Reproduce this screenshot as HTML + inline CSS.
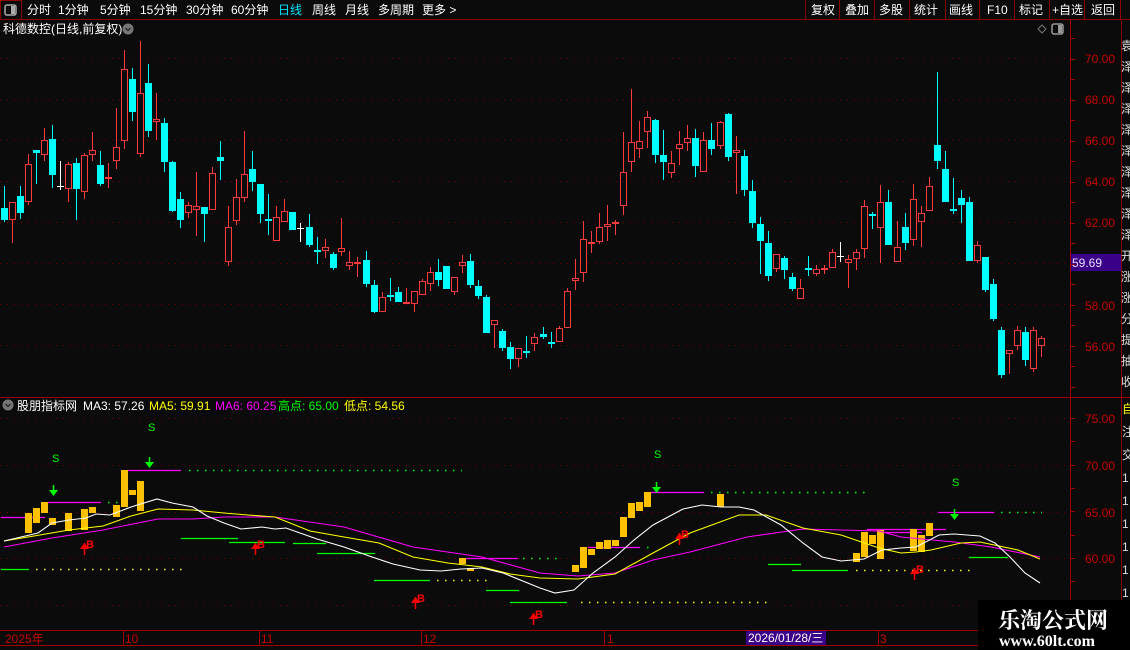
<!DOCTYPE html>
<html><head><meta charset="utf-8"><style>
html,body{margin:0;padding:0;background:#0b0b0b;width:1130px;height:650px;overflow:hidden}
svg{display:block}
text{font-family:"Liberation Sans","Noto Sans CJK SC",sans-serif;font-size:12px}
</style></head><body>
<svg id="s" width="1130" height="650" xmlns="http://www.w3.org/2000/svg">
<rect width="1130" height="650" fill="#0b0b0b"/>
<g fill="#fff">
<rect x="0.5" y="0.5" width="21" height="19" fill="none" stroke="#8b0000"/>
<rect x="5" y="5" width="11" height="10" rx="2" fill="none" stroke="#aaa" stroke-width="1.5"/><rect x="11" y="6" width="4" height="8" fill="#aaa"/>
<text x="27" y="14">分时</text><text x="58" y="14">1分钟</text><text x="100" y="14">5分钟</text><text x="140" y="14">15分钟</text><text x="186" y="14">30分钟</text><text x="231" y="14">60分钟</text>
<text x="278" y="14" fill="#00e5ff">日线</text><text x="312" y="14">周线</text><text x="345" y="14">月线</text><text x="378" y="14">多周期</text><text x="422" y="14">更多 &gt;</text>
<text x="811" y="14">复权</text><text x="845" y="14">叠加</text><text x="879" y="14">多股</text><text x="914" y="14">统计</text><text x="949" y="14">画线</text><text x="987" y="14">F10</text><text x="1019" y="14">标记</text><text x="1052" y="14">+自选</text><text x="1091" y="14">返回</text>
</g>
<g stroke="#8b0000" fill="none">
<line x1="0" y1="19.5" x2="1130" y2="19.5"/>
<line x1="805.5" y1="0" x2="805.5" y2="20"/><line x1="839.5" y1="0" x2="839.5" y2="20"/><line x1="874.5" y1="0" x2="874.5" y2="20"/><line x1="909.5" y1="0" x2="909.5" y2="20"/><line x1="945.5" y1="0" x2="945.5" y2="20"/><line x1="979.5" y1="0" x2="979.5" y2="20"/><line x1="1014.5" y1="0" x2="1014.5" y2="20"/><line x1="1049.5" y1="0" x2="1049.5" y2="20"/><line x1="1084.5" y1="0" x2="1084.5" y2="20"/><line x1="1120.5" y1="0" x2="1120.5" y2="20"/>
<line x1="1070.5" y1="20" x2="1070.5" y2="645" stroke="#a00000"/>
<line x1="1121.5" y1="20" x2="1121.5" y2="650"/>
<line x1="0" y1="397.5" x2="1130" y2="397.5" stroke="#a00000"/>
<line x1="0" y1="630.5" x2="1070" y2="630.5" stroke="#a00000"/>
<line x1="0" y1="645.5" x2="1070" y2="645.5" stroke="#a00000"/>
</g>
<text x="3" y="33" fill="#fff">科德数控(日线,前复权)</text>
<circle cx="128" cy="29" r="5.5" fill="#777"/><path d="M125.5 28 l2.5 2.5 l2.5 -2.5" stroke="#222" fill="none" stroke-width="1.3"/>
<path d="M1042 25 l4 4 l-4 4 l-4 -4z" stroke="#777" fill="none"/>
<rect x="1052" y="24" width="11" height="10" rx="2" fill="none" stroke="#999" stroke-width="1.5"/><rect x="1058" y="25" width="4" height="8" fill="#999"/>
<g id="grid"></g>
<g id="candles"></g>
<g fill="#c80000">
<text x="1085" y="63">70.00</text><text x="1085" y="104">68.00</text><text x="1085" y="145">66.00</text><text x="1085" y="186">64.00</text><text x="1085" y="227">62.00</text><text x="1085" y="310">58.00</text><text x="1085" y="351">56.00</text>
<text x="1085" y="423">75.00</text><text x="1085" y="470">70.00</text><text x="1085" y="517">65.00</text><text x="1085" y="563">60.00</text>
</g>
<rect x="1071" y="254" width="50" height="17" fill="#3a0088"/>
<text x="1072" y="267" fill="#e8e0ff">59.69</text>
<g id="ticks" stroke="#a00000"></g>
<g fill="#ddd" id="strip"></g>
<circle cx="8" cy="405" r="5.5" fill="#777"/><path d="M5.5 404 l2.5 2.5 l2.5 -2.5" stroke="#222" fill="none" stroke-width="1.3"/>
<text x="17" y="410" fill="#fff">股朋指标网</text>
<text x="83" y="410" fill="#fff">MA3: 57.26</text>
<text x="149" y="410" fill="#ffff00">MA5: 59.91</text>
<text x="215" y="410" fill="#ff00ff">MA6: 60.25</text>
<text x="278" y="410" fill="#00ff00">高点: 65.00</text>
<text x="344" y="410" fill="#ffff00">低点: 54.56</text>
<g id="ind"></g>
<g fill="#c80000">
<text x="5" y="643">2025年</text><text x="125" y="643">10</text><text x="261" y="643">11</text><text x="423" y="643">12</text><text x="607" y="643">1</text><text x="880" y="643">3</text>
</g>
<g stroke="#a00000"><line x1="123.5" y1="630" x2="123.5" y2="645"/><line x1="259.5" y1="630" x2="259.5" y2="645"/><line x1="421.5" y1="630" x2="421.5" y2="645"/><line x1="604.5" y1="630" x2="604.5" y2="645"/><line x1="878.5" y1="630" x2="878.5" y2="645"/></g>
<rect x="746" y="631" width="80" height="14" fill="#3a0088"/>
<text x="748" y="642" fill="#fff">2026/01/28/三</text>
<rect x="978" y="600" width="152" height="50" fill="#000"/>
<text x="998" y="628" fill="#fff" style="font-family:'Noto Serif CJK SC','Noto Sans CJK SC',serif;font-size:22px;font-weight:bold">乐淘公式网</text>
<text x="999" y="646" fill="#fff" style="font-family:'Liberation Serif',serif;font-size:16px;font-weight:bold">www.60lt.com</text>
</svg>
<script>
var NS="http://www.w3.org/2000/svg";
function el(p,t,a){var e=document.createElementNS(NS,t);for(var k in a)e.setAttribute(k,a[k]);p.appendChild(e);return e;}
var G=document.getElementById('grid'),C=document.getElementById('candles'),I=document.getElementById('ind'),T=document.getElementById('ticks');
[58.3,99.3,140.3,181.3,222.3,263.3,304.3,345.3,418,465,512,558,605].forEach(function(y){el(G,'line',{x1:0,x2:1070,y1:Math.round(y)+.5,y2:Math.round(y)+.5,stroke:'#6e0000','stroke-dasharray':'1 6'});});
for(var y=38;y<395;y+=20.5)el(T,'line',{x1:1070,x2:1075,y1:Math.round(y)+.5,y2:Math.round(y)+.5});
for(var y=418;y<628;y+=23.3)el(T,'line',{x1:1070,x2:1075,y1:Math.round(y)+.5,y2:Math.round(y)+.5});
var S=document.getElementById('strip');
for(var i=0;i<17;i++)el(S,'text',{x:1121,y:50+i*21}).textContent=["袁","泽","泽","泽","泽","泽","泽","泽","泽","泽","开","涨","涨","分","提","抽","收"][i];
["自","注","交","1","1","1","1","1","1","1","1","1"].forEach(function(c,i){var t=el(S,'text',{x:1122,y:413+i*23});t.textContent=c;if(i==0)t.setAttribute('fill','#ff0');});
var Z6=[[13,'c',504,540,438,545],[37,'r',487,541,487,608],[61,'c',468,518,438,537],[85,'r',373,487,342,494],[109,'c',330,338,330,431],[133,'r',301,346,264,362],[157,'c',297,404,255,443],[181,'w',437,440,363,450],[205,'r',373,446,366,486],[229,'c',369,446,354,540],[253,'r',346,455,339,476],[277,'r',331,346,276,362],[301,'c',375,431,333,437],[325,'r',411,415,369,443],[349,'r',322,364,204,386],[373,'r',88,304,30,326],[397,'c',117,215,84,242],[421,'r',160,343,3,350],[445,'c',129,272,72,291],[469,'r',238,247,159,299],[493,'c',249,365,234,395],[517,'c',366,512,363,515],[541,'c',477,539,456,563],[565,'r',496,520,486,533],[589,'r',499,511,396,587],[613,'c',501,521,501,605],[637,'r',400,511,381,511],[661,'c',351,362,303,419],[685,'r',562,667,498,677],[709,'r',472,544,417,554],[733,'r',403,475,273,485],[757,'c',387,425,333,452],[781,'c',432,521,432,549],[805,'c',537,542,462,584],[829,'r',532,604,498,604],[853,'r',514,547,477,547],[877,'c',516,569,516,569],[901,'w',563,565,550,606]];
var Z9=[[58,'c',441,494,402,500],[82,'c',510,512,471,551],[106,'r',502,514,477,533],[130,'c',522,563,516,570],[154,'r',505,517,414,527],[178,'r',547,559,513,569],[202,'r',546,548,531,590],[229,'c',540,611,513,620],[253,'c',615,695,600,699],[277,'r',652,697,636,697],[301,'c',645,647,594,662],[325,'c',636,665,621,665],[349,'r',667,673,624,673],[373,'r',634,673,634,695],[397,'r',604,646,598,646],[421,'r',577,613,561,632],[445,'c',576,599,537,617],[469,'c',558,626,558,626],[493,'r',592,637,592,644],[517,'r',547,559,525,578],[541,'c',543,614,522,623],[565,'c',618,647,600,656],[589,'c',651,758,645,758],[613,'r',721,736,721,803],[637,'c',753,803,746,812],[661,'c',801,836,786,866],[685,'r',805,838,805,862],[709,'c',813,815,768,833],[733,'r',772,793,759,812],[760,'c',762,770,741,776],[784,'c',786,788,756,803],[808,'r',745,787,738,787],[832,'r',634,745,625,745],[856,'r',595,604,537,629],[880,'r',478,580,423,605],[904,'r',487,490,453,518],[928,'r',442,487,399,491],[952,'r',433,442,375,482],[976,'r',427,433,420,464],[1000,'r',277,379,156,404],[1024,'r',187,247,27,275],[1048,'r',184,208,123,233],[1072,'r',112,157,93,203],[1096,'c',121,224,117,248]];
var Z10=[[10,'c',285,305,210,360],[34,'r',310,340,273,353],[58,'r',253,268,213,315],[82,'r',235,250,195,272],[106,'c',235,317,208,350],[130,'r',241,335,216,335],[154,'c',241,266,189,285],[181,'r',187,257,183,267],[205,'c',162,290,159,302],[229,'r',271,280,228,401],[253,'c',288,389,270,407],[277,'c',393,488,360,503],[301,'c',492,542,471,641],[325,'c',549,647,513,662],[349,'r',583,626,583,635],[373,'c',594,629,588,656],[397,'c',651,686,639,692],[421,'r',685,718,657,718],[445,'c',625,628,588,647],[469,'r',628,643,615,647],[493,'r',625,631,615,643],[517,'r',577,625,567,625],[541,'w',588,590,546,605],[565,'r',598,610,585,683],[589,'r',577,598,567,629],[613,'r',439,568,420,593],[637,'c',462,464,456,506],[661,'r',427,505,375,608],[685,'c',426,554,390,554],[712,'r',562,607,483,607],[736,'c',501,548,459,570],[760,'r',418,541,372,557],[784,'r',460,485,438,560],[808,'r',379,454,351,454],[832,'c',255,302,36,326],[856,'c',327,425,273,425],[880,'c',447,449,354,461],[904,'c',414,434,390,488],[928,'c',426,602,411,602],[952,'r',556,604,543,610],[976,'c',591,689,591,695],[1000,'c',672,776,657,782],[1024,'c',810,944,801,953],[1048,'r',871,883,871,941],[1072,'r',811,859,798,869],[1096,'c',816,899,801,917],[1120,'r',811,928,801,935],[1144,'r',835,859,829,890]];
function draw(arr,ox,oy){arr.forEach(function(d){var x=Math.round(ox+d[0]/3),bt=Math.round(oy+d[2]/3),bb=Math.round(oy+d[3]/3),wt=Math.round(oy+d[4]/3),wb=Math.round(oy+d[5]/3);
if(bb-bt<1)bb=bt+1;
if(d[1]=='c'){el(C,'line',{x1:x+.5,x2:x+.5,y1:wt,y2:wb,stroke:'#00ffff'});el(C,'rect',{x:x-3,y:bt,width:7,height:Math.max(2,bb-bt),fill:'#00ffff'});}
else if(d[1]=='w'){el(C,'line',{x1:x+.5,x2:x+.5,y1:wt,y2:wb,stroke:'#fff'});el(C,'line',{x1:x-3,x2:x+4,y1:bt+.5,y2:bt+.5,stroke:'#fff'});}
else{el(C,'line',{x1:x+.5,x2:x+.5,y1:wt,y2:bt,stroke:'#ff3a3a'});el(C,'line',{x1:x+.5,x2:x+.5,y1:bb,y2:wb,stroke:'#ff3a3a'});el(C,'rect',{x:x-2.5,y:bt+.5,width:6,height:Math.max(1,bb-bt-1),fill:'none',stroke:'#ff3a3a'});}
});}
draw(Z6,0,40);draw(Z9,290,80);draw(Z10,660,60);
function seg(x1,x2,y,c){el(I,'line',{x1:x1,x2:x2,y1:y+.5,y2:y+.5,stroke:c,'stroke-width':1.3});}
function dots(x1,x2,y,c){el(I,'line',{x1:x1,x2:x2,y1:y+.5,y2:y+.5,stroke:c,'stroke-dasharray':'1.5 6.5','stroke-width':1.5});}
[[1,45,517],[48,101,502],[127,181,470],[466,518,558],[588,640,547],[651,704,492],[867,946,529],[879,922,532],[938,994,512]].forEach(function(s){seg(s[0],s[1],s[2],'#ff00ff');});
[[181,238,538],[229,285,542],[293,326,543],[317,375,553],[1,29,569],[374,430,580],[486,519,590],[510,567,602],[768,801,564],[792,848,570],[969,1008,557]].forEach(function(s){seg(s[0],s[1],s[2],'#00ff00');});
dots(108,118,502,'#00ff00');dots(189,462,470,'#00ff00');dots(523,563,558,'#00ff00');dots(647,650,547,'#00ff00');dots(711,866,492,'#00ff00');dots(1001,1042,512,'#00ff00');
dots(36,182,569,'#ffff00');dots(437,488,580,'#ffff00');dots(581,771,602,'#ffff00');dots(856,972,570,'#ffff00');
[[25,32,513,533],[33,40,508,523],[41,48,502,513],[49,56,518,525],[65,72,513,531],[81,88,509,530],[89,96,507,513],[113,120,505,517],[121,128,470,507],[129,136,490,495],[137,144,481,511],[459,466,558,564],[467,474,568,571],[572,579,565,572],[580,587,547,568],[588,595,549,555],[596,603,542,549],[604,611,540,549],[612,619,540,546],[620,627,517,537],[628,635,503,518],[636,643,502,511],[644,651,492,507],[717,724,494,507],[853,860,553,562],[861,868,532,557],[869,876,535,544],[877,884,530,559],[910,917,529,551],[918,925,535,552],[926,933,523,536]].forEach(function(b){el(I,'rect',{x:b[0],y:b[2],width:b[1]-b[0],height:b[3]-b[2],fill:'#ffc000'});});
function pl(pts,c){el(I,'polyline',{points:pts.join(' '),fill:'none',stroke:c,'stroke-width':1.1});}
pl(["4,547","52,538","103,530","158,519","193,519","224,517","275,517","344,527","413,547","482,557","540,573","578,576","615,573","653,560","690,552","747,537","803,529","879,531","901,537","954,542","991,547","1040,557"],'#ff00ff');
pl(["4,541","34,536","69,530","103,526","131,516","158,509","193,510","224,513","248,515","275,517","310,531","344,537","379,543","413,557","448,563","482,567","510,574","540,578","578,579","615,574","653,553","690,533","739,515","766,515","803,528","841,535","879,548","901,553","916,552","931,550","961,543","980,542","1018,550","1040,559"],'#ffff00');
pl(["4,541","38,533","52,523","69,520","86,518","96,514","110,515","131,507","157,499","172,503","193,507","207,516","224,523","241,529","262,527","275,529","286,528","300,533","317,539","344,547","372,557","393,564","420,570","441,571","461,569","482,568","503,573","540,588","555,593","574,590","593,573","615,557","634,540","653,525","683,509","702,505","721,507","739,507","754,510","781,525","803,543","822,557","841,561","864,559","882,550","901,548","916,547","939,535","954,534","980,536","995,543","1010,557","1025,573","1040,583"],'#ffffff');
[[56,462],[152,431],[658,458],[956,486]].forEach(function(p){var t=el(I,'text',{x:p[0]-4,y:p[1],fill:'#00ff00',style:'font-size:11px'});t.textContent='S';});
[[53,485],[149,457],[656,482],[954,509]].forEach(function(p){el(I,'line',{x1:p[0]+.5,x2:p[0]+.5,y1:p[1],y2:p[1]+8,stroke:'#00ff00','stroke-width':1.5});el(I,'path',{d:'M'+(p[0]-4)+' '+(p[1]+5)+' h9 l-4.5 6z',fill:'#00ff00'});});
[[86,543],[257,543],[417,597],[535,613],[681,533],[916,568]].forEach(function(p){var x=p[0]-2,y=p[1];el(I,'line',{x1:x+.5,x2:x+.5,y1:y,y2:y+12,stroke:'#ff0000','stroke-width':1.5});el(I,'path',{d:'M'+(x-4)+' '+(y+6)+' l4.5 -6 l4.5 6z',fill:'#ff0000'});var t=el(I,'text',{x:x+2,y:y+5,fill:'#ff0000',style:'font-size:11px;font-weight:bold'});t.textContent='B';});
</script>
</body></html>
